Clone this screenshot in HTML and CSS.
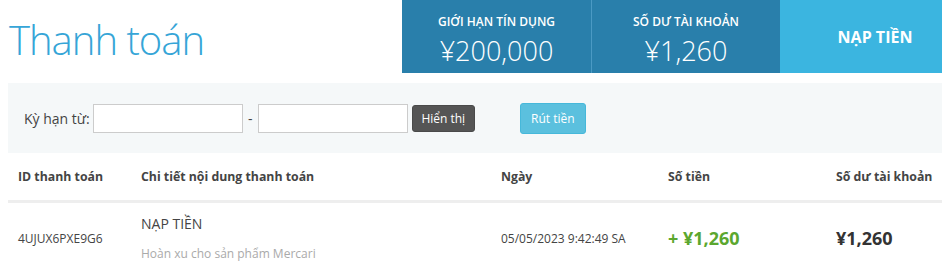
FILE: index.html
```html
<!DOCTYPE html>
<html lang="vi">
<head>
<meta charset="UTF-8">
<meta name="viewport" content="width=device-width, initial-scale=1.0">
<title>Thanh toán</title>
<link rel="stylesheet" href="styles.css">
</head>
<body>
<div class="page">
    <!-- ヘッダー -->
    <div class="header">
        <div class="title">Thanh toán</div>
        <div class="stats">
            <div class="stat">
                <div class="stat-label">GIỚI HẠN TÍN DỤNG</div>
                <div class="stat-value">¥200,000</div>
            </div>
            <div class="stat">
                <div class="stat-label">SỐ DƯ TÀI KHOẢN</div>
                <div class="stat-value">¥1,260</div>
            </div>
            <a href="#" class="deposit">NẠP TIỀN</a>
        </div>
    </div>

    <!-- 検索バー -->
    <div class="filter">
        <label class="filter-label">Kỳ hạn từ:</label>
        <input type="text" class="date-input">
        <span class="dash">-</span>
        <input type="text" class="date-input">
        <button class="btn btn-show">Hiển thị</button>
        <button class="btn btn-withdraw">Rút tiền</button>
    </div>

    <!-- 一覧 -->
    <div class="table">
        <div class="row head">
            <div class="cell">ID thanh toán</div>
            <div class="cell">Chi tiết nội dung thanh toán</div>
            <div class="cell">Ngày</div>
            <div class="cell">Số tiền</div>
            <div class="cell">Số dư tài khoản</div>
        </div>
        <div class="row item">
            <div class="cell id">4UJUX6PXE9G6</div>
            <div class="cell detail">
                <div class="detail-title">NẠP TIỀN</div>
                <div class="detail-note">Hoàn xu cho sản phẩm Mercari</div>
            </div>
            <div class="cell date">05/05/2023 9:42:49 SA</div>
            <div class="cell amount">+ ¥1,260</div>
            <div class="cell balance">¥1,260</div>
        </div>
    </div>
</div>
</body>
</html>
```

FILE: styles.css
```css
html {
    overflow: hidden;
}
body {
    margin: 0;
    padding: 0;
    font-family: "Open Sans", Arial, sans-serif;
    color: #333;
    background: #fff;
}
.page {
    width: 962px;
    padding-left: 8px;
}
/* Header */
.header {
    display: flex;
    justify-content: space-between;
    height: 73px;
}
.title {
    padding: 20px 0 0 1px;
    font-size: 40px;
    line-height: 40px;
    font-weight: 300;
    letter-spacing: -1px;
    color: #36a5d7;
}
.stats {
    display: flex;
}
.stat {
    width: 189px;
    background-color: #297fab;
    color: #fff;
    text-align: center;
    padding-top: 14px;
    box-sizing: border-box;
}
.stat + .stat {
    border-left: 1px solid #4b9ac4;
}
.stat-label {
    font-size: 12px;
    line-height: 16px;
    font-weight: 600;
}
.stat-value {
    margin-top: 6px;
    font-size: 27px;
    line-height: 30px;
    font-weight: 300;
}
.deposit {
    display: flex;
    justify-content: center;
    align-items: center;
    width: 190px;
    background-color: #3bb5e0;
    color: #fff;
    font-size: 16px;
    font-weight: 700;
    text-decoration: none;
}
/* Filter bar */
.filter {
    display: flex;
    align-items: center;
    height: 70px;
    margin-top: 10px;
    padding-left: 16px;
    background-color: #f5f8f9;
    font-size: 14px;
}
.filter-label {
    margin-right: 3px;
    color: #444;
}
.date-input {
    width: 150px;
    height: 29px;
    box-sizing: border-box;
    border: 1px solid #ccc;
    background: #fff;
    margin: 0;
    padding: 0 6px;
}
.dash {
    width: 15px;
    text-align: center;
    color: #444;
}
.btn {
    font-family: inherit;
    font-size: 12px;
    color: #fff;
    border-radius: 3px;
    cursor: pointer;
}
.btn-show {
    margin-left: 4px;
    width: 63px;
    height: 27px;
    background-color: #555;
    border: 1px solid #4a4a4a;
}
.btn-withdraw {
    margin-left: 45px;
    width: 66px;
    height: 31px;
    background-color: #5bc0de;
    border: 1px solid #46b8da;
}
/* Table */
.row {
    display: grid;
    grid-template-columns: 123px 360px 167px 168px 1fr;
    align-items: center;
}
.cell {
    padding-left: 10px;
}
.head {
    height: 47px;
    font-size: 12.3px;
    font-weight: 700;
    color: #444;
    border-bottom: 3px solid #eee;
}
.item {
    height: 70px;
    font-size: 12px;
    color: #444;
}
.detail-title {
    font-size: 14px;
    line-height: 20px;
}
.detail-note {
    margin-top: 11px;
    line-height: 18px;
    color: #aaa;
}
.amount {
    font-size: 18px;
    font-weight: 700;
    color: #5ba72f;
}
.balance {
    font-size: 18px;
    font-weight: 700;
    color: #333;
}
```
